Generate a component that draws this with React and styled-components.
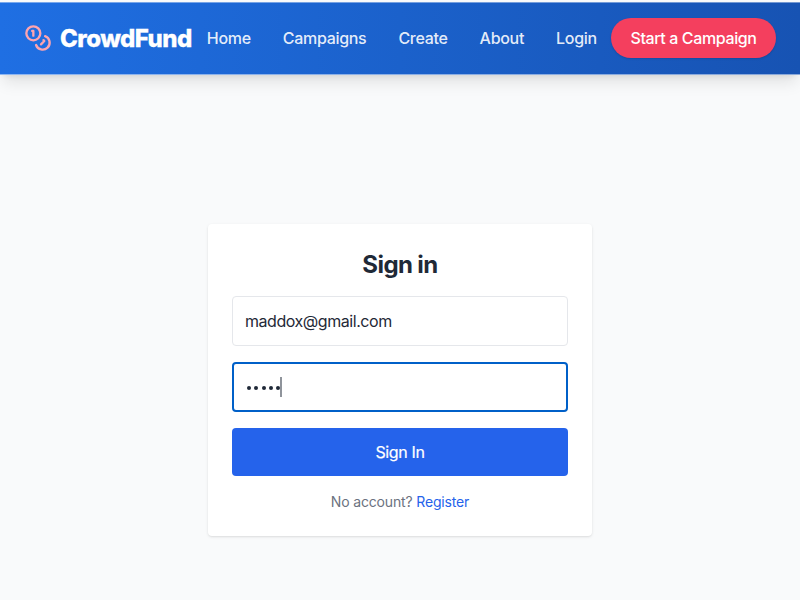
import React from 'react';
import styled, { createGlobalStyle } from 'styled-components';
import { Coins } from 'lucide-react';

const Global = createGlobalStyle`
  * { box-sizing: border-box; }
  body {
    margin: 0;
    background: #f9fafb;
    font-family: Inter, "Liberation Sans", sans-serif;
    color: #1f2937;
    overflow: hidden;
  }
`;

const Page = styled.div`
  height: 600px;
  display: flex;
  flex-direction: column;
  padding-top: 2px;
`;

const Header = styled.header`
  height: 73px;
  flex: none;
  display: flex;
  align-items: center;
  justify-content: space-between;
  padding: 0 24px 1px;
  color: #fff;
  background:
    linear-gradient(rgba(255, 255, 255, 0.4), rgba(255, 255, 255, 0.4)) top / 100% 1px no-repeat,
    linear-gradient(rgba(255, 255, 255, 0.5), rgba(255, 255, 255, 0.5)) bottom / 100% 1px no-repeat,
    linear-gradient(90deg, #1f6fe3, #1753b3);
  box-shadow: 0 10px 15px -3px rgba(0, 0, 0, 0.1), 0 4px 6px -4px rgba(0, 0, 0, 0.1);
`;

const Brand = styled.a`
  display: flex;
  align-items: center;
  gap: 8px;
  font-weight: 800;
  font-size: 24px;
  line-height: 32px;
  letter-spacing: -0.55px;
  white-space: nowrap;
  -webkit-text-stroke: 0.3px #fff;
  svg { color: #fda4af; }
`;

const BrandName = styled.span`
  padding-top: 2px;
`;

const Nav = styled.nav`
  display: flex;
  gap: 32px;
  font-size: 16px;
  font-weight: 500;
  line-height: 24px;
  letter-spacing: -0.3px;
  padding-left: 1px;
  color: rgba(255, 255, 255, 0.9);
`;

const Cta = styled.button`
  border: 0;
  border-radius: 20px;
  width: 165px;
  height: 40px;
  background: #f43f5e;
  color: #fff;
  font: 500 16px/24px Inter, sans-serif;
  letter-spacing: -0.38px;
  padding: 0;
  white-space: nowrap;
  box-shadow: 0 1px 2px rgba(0, 0, 0, 0.15);
`;

const Main = styled.main`
  flex: 1;
  display: flex;
  justify-content: center;
  align-items: flex-start;
  padding-top: 149px;
`;

const Card = styled.div`
  width: 384px;
  height: 312px;
  background: #fff;
  border-radius: 4px;
  padding: 24px;
  box-shadow: 0 1px 3px rgba(0, 0, 0, 0.1), 0 1px 2px -1px rgba(0, 0, 0, 0.1);
  display: flex;
  flex-direction: column;
`;

const Title = styled.h1`
  margin: 0 0 15px;
  padding-top: 1px;
  text-align: center;
  font-size: 24px;
  line-height: 32px;
  font-weight: 700;
  letter-spacing: -0.6px;
`;

const Field = styled.div`
  height: 50px;
  flex: none;
  display: flex;
  align-items: center;
  border-radius: 4px;
  border: ${p => (p.$focus ? '2px solid #0060c8' : '1px solid #e5e7eb')};
  padding: 0 12px;
  margin-bottom: 16px;
  font-size: 16px;
  letter-spacing: -0.45px;
`;

const Dots = styled.span`
  display: flex;
  gap: 3.25px;
  padding: 2px 0 0 1px;
`;

const Dot = styled.i`
  width: 4px;
  height: 4px;
  border-radius: 50%;
  background: #1f2937;
`;

const Caret = styled.i`
  width: 2px;
  height: 20px;
  background: #8f949b;
`;

const Submit = styled.button`
  height: 48px;
  flex: none;
  border: 0;
  border-radius: 4px;
  background: #2563eb;
  color: #fff;
  font: 400 16px/24px Inter, sans-serif;
  letter-spacing: -0.35px;
  -webkit-text-stroke: 0.2px #fff;
`;

const Note = styled.p`
  margin: 16px 0 0;
  text-align: center;
  font-size: 14px;
  line-height: 20px;
  letter-spacing: -0.16px;
  color: #6b7280;
  a { color: #2563eb; }
`;

const links = ['Home', 'Campaigns', 'Create', 'About', 'Login'];

export default function App() {
  return (
    <>
      <Global />
      <Page>
        <Header>
          <Brand>
            <Coins size={28} />
            <BrandName>CrowdFund</BrandName>
          </Brand>
          <Nav>{links.map(t => <a key={t}>{t}</a>)}</Nav>
          <Cta>Start a Campaign</Cta>
        </Header>
        <Main>
          <Card>
            <Title>Sign in</Title>
            <Field>maddox@gmail.com</Field>
            <Field $focus>
              <Dots>{[0, 1, 2, 3, 4].map(i => <Dot key={i} />)}</Dots>
              <Caret />
            </Field>
            <Submit>Sign In</Submit>
            <Note>No account? <a>Register</a></Note>
          </Card>
        </Main>
      </Page>
    </>
  );
}
